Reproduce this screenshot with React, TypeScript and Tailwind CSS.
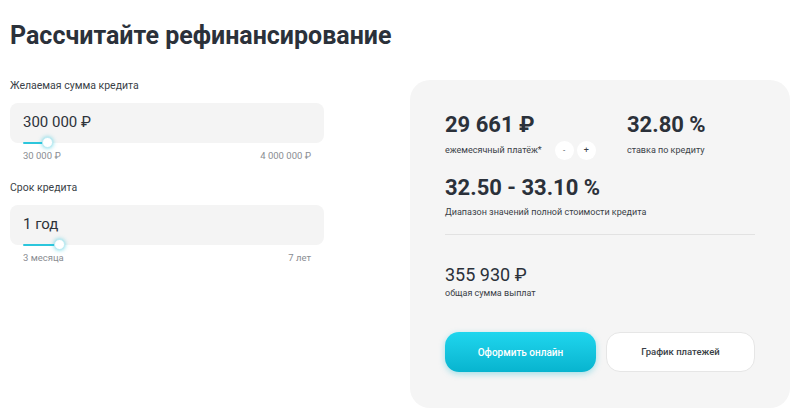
import React, { useState } from 'react'

const font = { fontFamily: 'Roboto, "Noto Sans", sans-serif' }

interface SliderFieldProps {
  label: string,
  value: string,
  min: string,
  max: string,
  fill: number
}

function SliderField({ label, value, min, max, fill }: SliderFieldProps) {
  return (
    <div className="mb-[23px]">
      <div className="text-[10.5px] text-[#3a3f47] leading-none mb-[11px]">{label}</div>
      <div className="relative h-[40px] w-[314px] rounded-[8px] bg-[#f4f4f4] flex items-center px-[13px]">
        <span className="text-[15px] text-[#2d323a]">{value}</span>
        <div className="absolute left-[13px] bottom-[-1px] h-[2px] rounded bg-[#2cc6dc]" style={{ width: fill }} />
        <div
          className="absolute bottom-[-5px] h-[11px] w-[11px] rounded-full bg-white border border-[#bdebf3] shadow-[0_0_4px_rgba(44,198,220,0.7)]"
          style={{ left: 13 + fill - 5 }}
        />
      </div>
      <div className="flex justify-between w-[301px] pl-[13px] mt-[8px] text-[9.5px] text-[#8a8d92] leading-none">
        <span>{min}</span>
        <span>{max}</span>
      </div>
    </div>
  )
}

export default function App() {
  const [payment] = useState('29 661 ₽')

  return (
    <div className="w-[800px] h-[415px] bg-white overflow-hidden" style={font}>
      <h1 className="pt-[20px] pl-[10px] text-[25px] font-bold text-[#2b313a] leading-[32px]">
        Рассчитайте рефинансирование
      </h1>

      <div className="flex pl-[10px] mt-[28px]">
        <div className="w-[400px] pt-[1px]">
          <SliderField label="Желаемая сумма кредита" value="300 000 ₽" min="30 000 ₽" max="4 000 000 ₽" fill={24} />
          <SliderField label="Срок кредита" value="1 год" min="3 месяца" max="7 лет" fill={36} />
        </div>

        <div className="w-[380px] h-[328px] rounded-[20px] bg-[#f5f5f5] px-[35px] pt-[31px]">
          <div className="flex">
            <div className="w-[182px]">
              <div className="text-[22px] font-bold text-[#2b313a] leading-[28px]">{payment}</div>
              <div className="flex items-center mt-[2px]">
                <span className="text-[9px] text-[#3a3f47]">ежемесячный платёж*</span>
                <div className="flex gap-[3px] ml-[13px]">
                  <button className="h-[19px] w-[19px] rounded-full bg-white text-[8px] text-[#3a3f47] flex items-center justify-center">-</button>
                  <button className="h-[19px] w-[19px] rounded-full bg-white text-[9px] text-[#3a3f47] flex items-center justify-center">+</button>
                </div>
              </div>
            </div>
            <div>
              <div className="text-[22px] font-bold text-[#2b313a] leading-[28px]">32.80 %</div>
              <div className="text-[9px] text-[#3a3f47] mt-[2px] leading-[19px]">ставка по кредиту</div>
            </div>
          </div>

          <div className="mt-[14px]">
            <div className="text-[22px] font-bold text-[#2b313a] leading-[28px]">32.50 - 33.10 %</div>
            <div className="text-[9px] text-[#3a3f47] mt-[4px]">Диапазон значений полной стоимости кредита</div>
          </div>

          <div className="h-px bg-[#e2e2e2] mt-[14px]" />

          <div className="mt-[29px]">
            <div className="text-[18px] text-[#2b313a] leading-[22px]">355 930 ₽</div>
            <div className="text-[9px] text-[#3a3f47] mt-[1px]">общая сумма выплат</div>
          </div>

          <div className="flex gap-[10px] mt-[32px]">
            <button className="w-[151px] h-[40px] rounded-[14px] bg-gradient-to-b from-[#1fd6ee] to-[#07b4cf] text-white text-[10px] font-medium shadow-[0_2px_6px_rgba(7,180,207,0.35)]">
              Оформить онлайн
            </button>
            <button className="w-[149px] h-[40px] rounded-[14px] bg-white border border-[#e6e6e6] text-[#3a3f47] text-[9.5px] font-medium">
              График платежей
            </button>
          </div>
        </div>
      </div>
    </div>
  )
}
